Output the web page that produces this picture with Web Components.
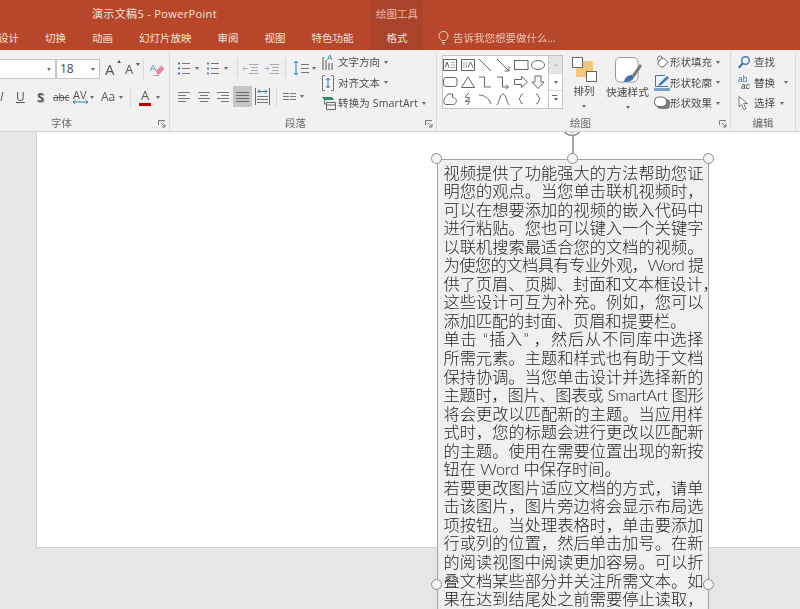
<!DOCTYPE html>
<html lang="zh">
<head>
<meta charset="utf-8">
<title>演示文稿5 - PowerPoint</title>
<style>
html, body { margin: 0; height: 609px; overflow: hidden; }
body { font-family: "Open Sans", "Noto Sans CJK SC", sans-serif; background: #e6e6e6; }
</style>
</head>
<body>
<ppt-app></ppt-app>
<script>
const UI_FONT = '"Open Sans", "Noto Sans CJK SC", sans-serif';

// shared by the ribbon panels
const PANEL_CSS = `
    :host { display: block; font: 10.5px/14px ${UI_FONT}; color: #4a4a4a; }
    .row { display: flex; align-items: center; height: 20px; white-space: nowrap; }
    .row > * { flex: none; }
    svg { display: block; overflow: visible; }
    .caret { width: 0; height: 0; border: 2.5px solid transparent; border-top: 3px solid #6a6a6a; border-bottom: 0; }
    .sep { width: 1px; height: 20px; background: #d9d9d9; }
`;

const line = (d, color = '#777') => `<path d="${d}" fill="none" stroke="${color}"/>`;
const svg = (w, h, body) => `<svg width="${w}" height="${h}" viewBox="0 0 ${w} ${h}">${body}</svg>`;
const caret = (ml = 0) => `<i class="caret" style="margin-left:${ml}px"></i>`;
const sep = (ml = 0) => `<i class="sep" style="margin-left:${ml}px"></i>`;

class PptTitlebar extends HTMLElement {
    constructor() {
        super();
        this.attachShadow({mode: 'open'});
    }

    connectedCallback() {
        const tabs = ['设计', '切换', '动画', '幻灯片放映', '审阅', '视图', '特色功能'];
        this.shadowRoot.innerHTML = `
        <style>
        :host { display: flex; height: 50px; background: #b7472a; color: #f6e3dc; font: 10.5px/14px ${UI_FONT}; }
        .main { width: 371px; flex: none; }
        .title { height: 26px; padding: 7px 0 0 92px; box-sizing: border-box; font-size: 11px; letter-spacing: .35px; }
        .tabs { display: flex; gap: 26px; margin: 5px 0 0 -2px; }
        .context { width: 52px; flex: none; background: #a9432a; text-align: center; color: #eab9a6; }
        .context .name { height: 26px; padding-top: 7px; box-sizing: border-box; }
        .context .tab { margin-top: 5px; color: #f6e3dc; }
        .tell { display: flex; align-items: center; gap: 4px; margin: 31px 0 0 15px; height: 14px; color: #eec4b4; white-space: nowrap; }
        </style>
        <div class="main">
            <div class="title">演示文稿5 - PowerPoint</div>
            <div class="tabs">${tabs.map(t => `<span>${t}</span>`).join('')}</div>
        </div>
        <div class="context">
            <div class="name">绘图工具</div>
            <div class="tab">格式</div>
        </div>
        <div class="tell">
            <svg width="11" height="14" viewBox="0 0 11 14" fill="none" stroke="#f3d4c7">
                <path d="M3.5 9.5C2.5 8 1 7 1 4.8A4.5 4.5 0 0 1 10 4.8C10 7 8.5 8 7.500 9.500Z"/>
                <path d="M4 11.500H7M4.500 13H6.500"/>
            </svg>
            <span>告诉我您想要做什么...</span>
        </div>
        `;
    }
}

class RibbonGroup extends HTMLElement {
    constructor() {
        super();
        this.attachShadow({mode: 'open'});
    }

    connectedCallback() {
        const launcher = this.hasAttribute('launcher') ? `
            <svg class="launcher" width="8" height="8" viewBox="0 0 8 8" fill="none" stroke="#777">
                <path d="M.5 5V.5H7"/><path d="M3 3L7 7M7 4V7H4"/>
            </svg>` : '';
        this.shadowRoot.innerHTML = `
        <style>
        :host { display: flex; flex-direction: column; flex: none; position: relative; box-sizing: border-box; height: 78px; margin-top: 2px; border-right: 1px solid #d9d9d9; width: ${this.getAttribute('width')}px; }
        .body { height: 64px; }
        .label { text-align: center; font: 10.5px/14px ${UI_FONT}; color: #6a6a6a; margin-left: ${this.getAttribute('label-shift') || 0}px; }
        .launcher { position: absolute; right: 3px; bottom: 2px; }
        </style>
        <div class="body"><slot></slot></div>
        <div class="label">${this.getAttribute('label')}</div>
        ${launcher}
        `;
    }
}

class FontPanel extends HTMLElement {
    constructor() {
        super();
        this.attachShadow({mode: 'open'});
    }

    connectedCallback() {
        this.shadowRoot.innerHTML = `
        <style>
        ${PANEL_CSS}
        :host { padding-top: 7px; }
        .row + .row { margin-top: 8px; }
        .box { box-sizing: border-box; height: 20px; background: #fff; border: 1px solid #c4c4c4; display: flex; align-items: center; justify-content: space-between; padding: 0 4px 0 3px; font-size: 12px; }
        .t { color: #555; }
        .big { font-size: 15px; line-height: 20px; position: relative; }
        .sup { position: absolute; right: -4px; top: 1px; width: 0; height: 0; border: 2.500px solid transparent; border-top: 0; border-bottom: 3px solid #555; }
        .sup.down { border-top: 3px solid #555; border-bottom: 0; }
        </style>
        <div class="row">
            <div class="box" style="width:57px;margin-left:-1px;justify-content:flex-end">${caret()}</div>
            <div class="box" style="width:44px"><span>18</span>${caret()}</div>
            <span class="t big" style="margin-left:5px;width:12px">A<i class="sup"></i></span>
            <span class="t" style="margin-left:8px;width:11px;font-size:13px;position:relative">A<i class="sup down"></i></span>
            ${sep(7)}
            <span style="margin-left:6px">
                <svg width="15" height="15" viewBox="0 0 15 15">
                    <path d="M6 9L11 3.500L14.500 6.500L9.500 12.500H7Z" fill="#e58a9c"/>
                    <text x="0" y="9" font-size="9" font-family="Liberation Sans" fill="#3c74b4">A</text>
                    <path d="M3 13.500H9" stroke="#aaa"/>
                </svg>
            </span>
        </div>
        <div class="row">
            <span class="t" style="width:5px;font-style:italic;font-size:12px">I</span>
            <span class="t" style="margin-left:11px;width:10px;font-size:12px;text-decoration:underline">U</span>
            <span class="t" style="margin-left:11px;width:9px;font-size:13px;font-weight:700;text-shadow:1px 1px 0 #bbb">S</span>
            <span class="t" style="margin-left:7px;width:15px;font-size:10px;text-decoration:line-through">abc</span>
            <span class="t" style="margin-left:5px;width:15px;font-size:11px;line-height:11px;position:relative;top:-3px">AV
                <svg style="position:absolute;left:0;top:11px" width="15" height="4" viewBox="0 0 15 4"><path d="M0 2H15M2.500 0L0 2L2.500 4M12.500 0L15 2L12.500 4" fill="none" stroke="#3b7cc0"/></svg>
            </span>
            ${caret(2)}
            <span class="t" style="margin-left:7px;width:18px;font-size:12px">Aa</span>
            ${caret(0)}
            ${sep(7)}
            <span class="t" style="margin-left:8px;width:12px;font-size:13px;line-height:14px;text-align:center;border-bottom:3px solid #c00000;height:15px">A</span>
            ${caret(5)}
        </div>
        `;
    }
}

class ParagraphPanel extends HTMLElement {
    constructor() {
        super();
        this.attachShadow({mode: 'open'});
    }

    connectedCallback() {
        const lines = (ys, x1 = 0, x2 = 12) => ys.map(y => `M${x1} ${y}H${x2}`).join('');
        const dots = (c = '#3c74b4') => [1.5, 6.5, 11.5].map(y => `<rect x="0" y="${y - 1}" width="2" height="2" fill="${c}"/>`).join('');
        const bullets = svg(12, 13, dots() + line('M4 1.500H12M4 6.500H12M4 11.500H12'));
        const numbers = svg(12, 13, dots('#5b8ac0') + line('M4 1.500H12M4 6.500H12M4 11.500H12'));
        const outdent = svg(15, 11, line('M6 1.500H15M8 4.500H15M8 7.500H15M6 10.500H15', '#aaa') + line('M5 5.500H0M2 3.500L0 5.500L2 7.500', '#9db9d6'));
        const indent = svg(15, 11, line('M6 1.500H15M8 4.500H15M8 7.500H15M6 10.500H15', '#aaa') + line('M0 5.500H5M3 3.500L5 5.500L3 7.500', '#9db9d6'));
        const spacing = svg(16, 16, line('M3 1V15', '#3c74b4') + line('M1 3L3 1L5 3M1 13L3 15L5 13', '#3c74b4') + line('M8 4.500H16M8 8.500H16M8 12.500H16'));
        const left = svg(12, 11, line('M0 1.500H12M0 4.500H8M0 7.500H12M0 10.500H8'));
        const center = svg(12, 11, line('M0 1.500H12M2 4.500H10M0 7.500H12M2 10.500H10'));
        const right = svg(12, 11, line('M0 1.500H12M4 4.500H12M0 7.500H12M4 10.500H12'));
        const justify = svg(13, 11, line(lines([1.5, 4.5, 7.5, 10.5], 0, 13), '#666'));
        const distribute = svg(15, 17, line('M.5 0V17M14.500 0V17', '#6a6a6a') + line('M3 3.500H12M3 3.500L5 1.500M3 3.500L5 5.500M12 3.500L10 1.500M12 3.500L10 5.500', '#3c74b4') + line(lines([8.5, 11.5, 14.5], 2, 13)));
        const cols = svg(13, 9, line('M0 1.500H6M7 1.500H13M0 4.500H6M7 4.500H13M0 7.500H6M7 7.500H13'));
        const textdir = svg(12, 18, line('M1 4V17M4 7V17', '#555') + `<text x="5" y="7" font-size="8" font-family="Liberation Sans" fill="#3c74b4">A</text>` + line('M7 10V17M10 10V17', '#555'));
        const align = svg(12, 16, line('M3 .5H.5V15.500H3M9 .5H11.500V15.500H9', '#777') + line('M6 3V13M4 5L6 3L8 5M4 11L6 13L8 11', '#3c74b4'));
        const smart = svg(14, 14, `<path d="M0 1H10L12 4H2Z" fill="#2e8b6f"/>` + line('M4.500 6.500H13.500V13.500H4.500ZM4.500 9H13.500', '#666') + line('M2.500 4V8H4', '#2e8b6f'));
        this.shadowRoot.innerHTML = `
        <style>
        ${PANEL_CSS}
        :host { display: flex; }
        .left { width: 152px; flex: none; padding-top: 6px; }
        .left .row:last-child { margin-top: 8px; height: 21px; }
        .active { width: 19px; height: 21px; background: #c6c6c6; display: flex; align-items: center; justify-content: center; }
        .right .row { height: 20.500px; }
        .right .ico { width: 16px; }
        </style>
        <div class="left">
            <div class="row">
                <span style="margin-left:8px">${bullets}</span>${caret(5)}
                <span style="margin-left:8px">${numbers}</span>${caret(5)}
                ${sep(9)}
                <span style="margin-left:5px">${outdent}</span>
                <span style="margin-left:6px">${indent}</span>
                ${sep(6)}
                <span style="margin-left:7px">${spacing}</span>${caret(3)}
            </div>
            <div class="row">
                <span style="margin-left:8px">${left}</span>
                <span style="margin-left:8px">${center}</span>
                <span style="margin-left:7px">${right}</span>
                <span class="active" style="margin-left:4px">${justify}</span>
                <span style="margin-left:3px">${distribute}</span>
                ${sep(6)}
                <span style="margin-left:6px">${cols}</span>${caret(4)}
            </div>
        </div>
        <div class="right">
            <div class="row"><span class="ico">${textdir}</span><span>文字方向</span>${caret(4)}</div>
            <div class="row"><span class="ico">${align}</span><span>对齐文本</span>${caret(4)}</div>
            <div class="row"><span class="ico">${smart}</span><span style="letter-spacing:.15px">转换为 SmartArt</span>${caret(4)}</div>
        </div>
        `;
    }
}

class ShapeGallery extends HTMLElement {
    constructor() {
        super();
        this.attachShadow({mode: 'open'});
    }

    connectedCallback() {
        const s = d => svg(14, 14, `<g fill="none" stroke="#666">${d}</g>`);
        const shapes = [
            s('<rect x=".5" y="1.500" width="13" height="11"/><path d="M7.500 4.500H12M7.500 7H12M7.500 9.500H12" stroke="#aaa"/><path d="M2 9.500L4 4L6 9.500"/>'),
            s('<rect x=".5" y="1.500" width="13" height="11"/><path d="M3 4V10M5.500 4V10" stroke="#aaa"/><path d="M7 9.500L9.500 4L12 9.500"/>'),
            s('<path d="M1 1L13 13"/>'),
            s('<path d="M1 1L13 13M13 8.500V13H8.500"/>'),
            s('<rect x=".5" y="2.500" width="13.500" height="9"/>'),
            s('<ellipse cx="7" cy="7" rx="6.500" ry="4.500"/>'),
            s('<rect x=".5" y="2.500" width="13.500" height="9" rx="2.500"/>'),
            s('<path d="M7 2L13.500 12.500H.5Z"/>'),
            s('<path d="M1 2H6.500V12H13"/>'),
            s('<path d="M1 2H6.500V12H12M10 10L12.500 12L10 14"/>'),
            s('<path d="M.5 4.500H7.500V1.500L13.500 7L7.500 12.500V9.500H.5Z"/>'),
            s('<path d="M4 1H10V7H13L7 13.500L1 7H4Z"/>'),
            s('<path d="M3 12.500C.5 12.500 .5 9 1.500 6L5 2H9.500V5.500C13 6 14 8 13 10.500C12 12.500 10 13 8 12.500H3Z"/>'),
            s('<path d="M8 1L4 5L9 6L4 9.500L9 9L6 13"/>'),
            s('<path d="M1 3C6 3 11 6 13 12"/>'),
            s('<path d="M.5 13C3 13 3.500 2 7 2C10.500 2 11 13 13.500 13"/>'),
            s('<path d="M9 2C6 2 7 6 5 7C7 8 6 12 9 12"/>'),
            s('<path d="M5 2C8 2 7 6 9 7C7 8 8 12 5 12"/>')
        ];
        this.shadowRoot.innerHTML = `
        <style>
        ${PANEL_CSS}
        :host { width: 121px; height: 54px; box-sizing: border-box; margin: 3px 0 0 5px; display: flex; background: #fff; border: 1px solid #c4c4c4; flex: none; }
        .grid { width: 107px; flex: none; display: grid; grid-template-columns: repeat(6, 17.700px); grid-auto-rows: 17.333px; place-items: center; margin-left: -2px; }
        .scroll { width: 13px; flex: none; margin-left: 0; display: flex; flex-direction: column; border-left: 1px solid #c4c4c4; }
        .scroll div { flex: 1; display: flex; align-items: center; justify-content: center; }
        .scroll div + div { border-top: 1px solid #dcdcdc; }
        .scroll .off { background: #e4e4e4; }
        .up { width: 0; height: 0; border: 2.500px solid transparent; border-top: 0; border-bottom: 3px solid #bbb; }
        .more { position: relative; }
        .more::before { content: ""; position: absolute; left: 3px; top: 4px; width: 5px; height: 1px; background: #6a6a6a; }
        </style>
        <div class="grid">${shapes.join('')}</div>
        <div class="scroll">
            <div class="off"><i class="up"></i></div>
            <div>${caret()}</div>
            <div class="more">${caret()}</div>
        </div>
        `;
    }
}

class DrawingTools extends HTMLElement {
    constructor() {
        super();
        this.attachShadow({mode: 'open'});
    }

    connectedCallback() {
        const arrange = svg(25, 25, `
            <rect x="4" y="4" width="17" height="16" fill="#f2c777"/>
            <rect x=".5" y=".5" width="10" height="10" fill="#fff" stroke="#666"/>
            <rect x="14.500" y="14.500" width="10" height="10" fill="#fff" stroke="#666"/>`);
        const quick = svg(27, 27, `
            <path d="M5 .5H18C21 .5 23 2.500 23 5.500V20C23 23 21 25 18 25H5C2 25 .5 23 .5 20V5.500C.5 2.500 2 .5 5 .5Z" fill="#fff" stroke="#999"/>
            <path d="M9 25C10 19 14 18 17 18L19 21C17 24 13 25.500 9 25Z" fill="#3c74b4"/>
            <path d="M17 18L25 7L27 9L19 21Z" fill="#7a7a7a"/>`);
        const fill = svg(14, 14, `<path d="M4 6L8 2.500L13 7.500L8 12C6 13 3 10 3 8Z" fill="#fff" stroke="#666"/><path d="M4 7C2 5 2 1 5 1C7 1 7 3 7 4" fill="none" stroke="#666"/>`);
        const outline = svg(16, 17, `<path d="M1.500 1.500H11M1.500 1.500V12.500H14" fill="none" stroke="#3c74b4"/><path d="M5 10L13 2L15 4L7 11L4 12Z" fill="#3c74b4"/><rect x="0" y="14" width="16" height="3" fill="#7ba1cb"/>`);
        const effect = svg(16, 14, `<rect x="3" y="3" width="13" height="10" rx="4" fill="#7d7d7d"/><rect x=".5" y="1" width="12" height="9.500" rx="4" fill="#fff" stroke="#666"/>`);
        this.shadowRoot.innerHTML = `
        <style>
        ${PANEL_CSS}
        :host { display: flex; flex: none; margin-left: 1px; }
        .big { display: flex; flex-direction: column; align-items: center; flex: none; padding-top: 5px; }
        .big .name { line-height: 14px; }
        .big .caret { margin-top: 7px; }
        .arrange { width: 40px; }
        .arrange .name { margin-top: 2px; }
        .quick { width: 46px; margin-left: 1px; font-size: 10.750px; }
        .quick .name { margin-top: 1px; margin-left: -1px; }
        .list { margin-left: 3px; }
        .list .row { height: 20.500px; }
        .list .ico { width: 16px; display: flex; justify-content: center; }
        </style>
        <div class="big arrange">${arrange}<span class="name">排列</span>${caret()}</div>
        <div class="big quick">${quick}<span class="name">快速样式</span>${caret()}</div>
        <div class="list">
            <div class="row"><span class="ico">${fill}</span><span>形状填充</span>${caret(4)}</div>
            <div class="row"><span class="ico">${outline}</span><span>形状轮廓</span>${caret(4)}</div>
            <div class="row"><span class="ico">${effect}</span><span>形状效果</span>${caret(4)}</div>
        </div>
        `;
    }
}

class EditTools extends HTMLElement {
    constructor() {
        super();
        this.attachShadow({mode: 'open'});
    }

    connectedCallback() {
        const find = svg(12, 13, `<circle cx="7.500" cy="4.500" r="3.800" fill="none" stroke="#3c74b4" stroke-width="1.400"/><path d="M4.500 7.500L.8 12" stroke="#3c74b4" stroke-width="2"/>`);
        const swap = `<span style="display:block;width:13px;line-height:7px;font-size:8.500px;font-family:'Liberation Sans';color:#3c74b4">ab<br><span style="color:#444;padding-left:3px">ac</span></span>`;
        const pick = svg(11, 14, `<path d="M1 .5V11L3.500 8.500L6 13.500L8 12.500L5.500 7.500H9.500Z" fill="#fff" stroke="#777"/>`);
        this.shadowRoot.innerHTML = `
        <style>
        ${PANEL_CSS}
        :host { padding: 0 0 0 7px; }
        .row { height: 20.500px; }
        .ico { width: 16px; }
        </style>
        <div class="row"><span class="ico">${find}</span><span>查找</span></div>
        <div class="row"><span class="ico">${swap}</span><span>替换</span>${caret(9)}</div>
        <div class="row"><span class="ico">${pick}</span><span>选择</span>${caret(5)}</div>
        `;
    }
}

class PptRibbon extends HTMLElement {
    constructor() {
        super();
        this.attachShadow({mode: 'open'});
    }

    connectedCallback() {
        this.shadowRoot.innerHTML = `
        <style>
        :host { display: flex; box-sizing: border-box; height: 82px; background: #f2f1f1; border-bottom: 1px solid #d3d3d3; position: relative; z-index: 1; }
        .shapes { display: flex; }
        </style>
        <ribbon-group width="170" label="字体" label-shift="-46" launcher><font-panel></font-panel></ribbon-group>
        <ribbon-group width="267" label="段落" label-shift="-15" launcher><paragraph-panel></paragraph-panel></ribbon-group>
        <ribbon-group width="294" label="绘图" label-shift="-6" launcher>
            <div class="shapes"><shape-gallery></shape-gallery><drawing-tools></drawing-tools></div>
        </ribbon-group>
        <ribbon-group width="65" label="编辑"><edit-tools></edit-tools></ribbon-group>
        `;
    }
}

class SlideTextbox extends HTMLElement {
    constructor() {
        super();
        this.attachShadow({mode: 'open'});
    }

    connectedCallback() {
        // [text, justified, extra class]
        const rows = [
            ['视频提供了功能强大的方法帮助您证', 1],
            ['明您的观点。当您单击联机视频时，', 1],
            ['可以在想要添加的视频的嵌入代码中', 1],
            ['进行粘贴。您也可以键入一个关键字', 1],
            ['以联机搜索最适合您的文档的视频。', 1],
            ['为使您的文档具有专业外观，Word 提', 1, 'tighter'],
            ['供了页眉、页脚、封面和文本框设计，', 0],
            ['这些设计可互为补充。例如，您可以', 1],
            ['添加匹配的封面、页眉和提要栏。', 0],
            ['单击 “插入” ，然后从不同库中选择', 1],
            ['所需元素。主题和样式也有助于文档', 1],
            ['保持协调。当您单击设计并选择新的', 1],
            ['主题时，图片、图表或 SmartArt 图形', 1, 'tight'],
            ['将会更改以匹配新的主题。当应用样', 1],
            ['式时，您的标题会进行更改以匹配新', 1],
            ['的主题。使用在需要位置出现的新按', 1],
            ['钮在 Word 中保存时间。', 0],
            ['若要更改图片适应文档的方式，请单', 1],
            ['击该图片，图片旁边将会显示布局选', 1],
            ['项按钮。当处理表格时，单击要添加', 1],
            ['行或列的位置，然后单击加号。在新', 1],
            ['的阅读视图中阅读更加容易。可以折', 1],
            ['叠文档某些部分并关注所需文本。如', 1],
            ['果在达到结尾处之前需要停止读取，', 1]
        ];
        // px from the padding box, so the rings sit on the outline
        const handles = [[-1.5, -1.5], [134.5, -1.5], [270.5, -1.5], [-1.5, 424.5], [270.5, 424.5]];
        this.shadowRoot.innerHTML = `
        <style>
        :host { position: absolute; left: 400px; top: 27px; width: 272px; height: 852px; box-sizing: border-box; padding: 3.500px 4px 0 5.500px; background: #f0f0f0; border: 1.500px solid #a3a3a3; font: 300 16.200px/18.550px Lato, "Noto Sans CJK SC", sans-serif; color: #1e1e1e; }
        .l { white-space: nowrap; }
        .l.j { text-align: justify; text-align-last: justify; width: 260px; }
        .l.tight { letter-spacing: -.3px; }
        .l.tighter { letter-spacing: -.6px; }
        .h { position: absolute; width: 11px; height: 11px; margin: -5.500px; box-sizing: border-box; border: 1.500px solid #8c8c8c; border-radius: 50%; background: #f4f4f4; }
        .stem { position: absolute; left: 134px; top: -24px; width: 1.500px; height: 24px; background: #a3a3a3; }
        svg { position: absolute; left: 125px; top: -30px; overflow: visible; }
        </style>
        ${rows.map(([t, j, c]) => `<div class="l${j ? ' j' : ''}${c ? ' ' + c : ''}">${t}</div>`).join('')}
        <div class="stem"></div>
        <svg width="18" height="8" viewBox="0 0 18 8"><path d="M1 0C3 7 15 7 17 0" fill="none" stroke="#8c8c8c" stroke-width="1.500"/><path d="M4 0C6 3 12 3 14 0" fill="none" stroke="#aaa"/></svg>
        ${handles.map(([x, y]) => `<div class="h" style="left:${x}px;top:${y}px"></div>`).join('')}
        `;
    }
}

class SlideCanvas extends HTMLElement {
    constructor() {
        super();
        this.attachShadow({mode: 'open'});
    }

    connectedCallback() {
        this.shadowRoot.innerHTML = `
        <style>
        :host { display: block; flex: 1; background: #e6e6e6; padding-left: 36px; }
        .slide { position: relative; height: 416px; background: #fff; border-left: 1px solid #d2d2d2; border-bottom: 1px solid #d2d2d2; box-sizing: border-box; }
        </style>
        <div class="slide"><slide-textbox></slide-textbox></div>
        `;
    }
}

class PptApp extends HTMLElement {
    constructor() {
        super();
        this.attachShadow({mode: 'open'});
    }

    connectedCallback() {
        this.shadowRoot.innerHTML = `
        <style>
        :host { display: flex; flex-direction: column; height: 609px; overflow: hidden; filter: blur(.35px); }
        </style>
        <ppt-titlebar></ppt-titlebar>
        <ppt-ribbon></ppt-ribbon>
        <slide-canvas></slide-canvas>
        `;
    }
}

customElements.define('ppt-titlebar', PptTitlebar);
customElements.define('ribbon-group', RibbonGroup);
customElements.define('font-panel', FontPanel);
customElements.define('paragraph-panel', ParagraphPanel);
customElements.define('shape-gallery', ShapeGallery);
customElements.define('drawing-tools', DrawingTools);
customElements.define('edit-tools', EditTools);
customElements.define('ppt-ribbon', PptRibbon);
customElements.define('slide-textbox', SlideTextbox);
customElements.define('slide-canvas', SlideCanvas);
customElements.define('ppt-app', PptApp);
</script>
</body>
</html>
